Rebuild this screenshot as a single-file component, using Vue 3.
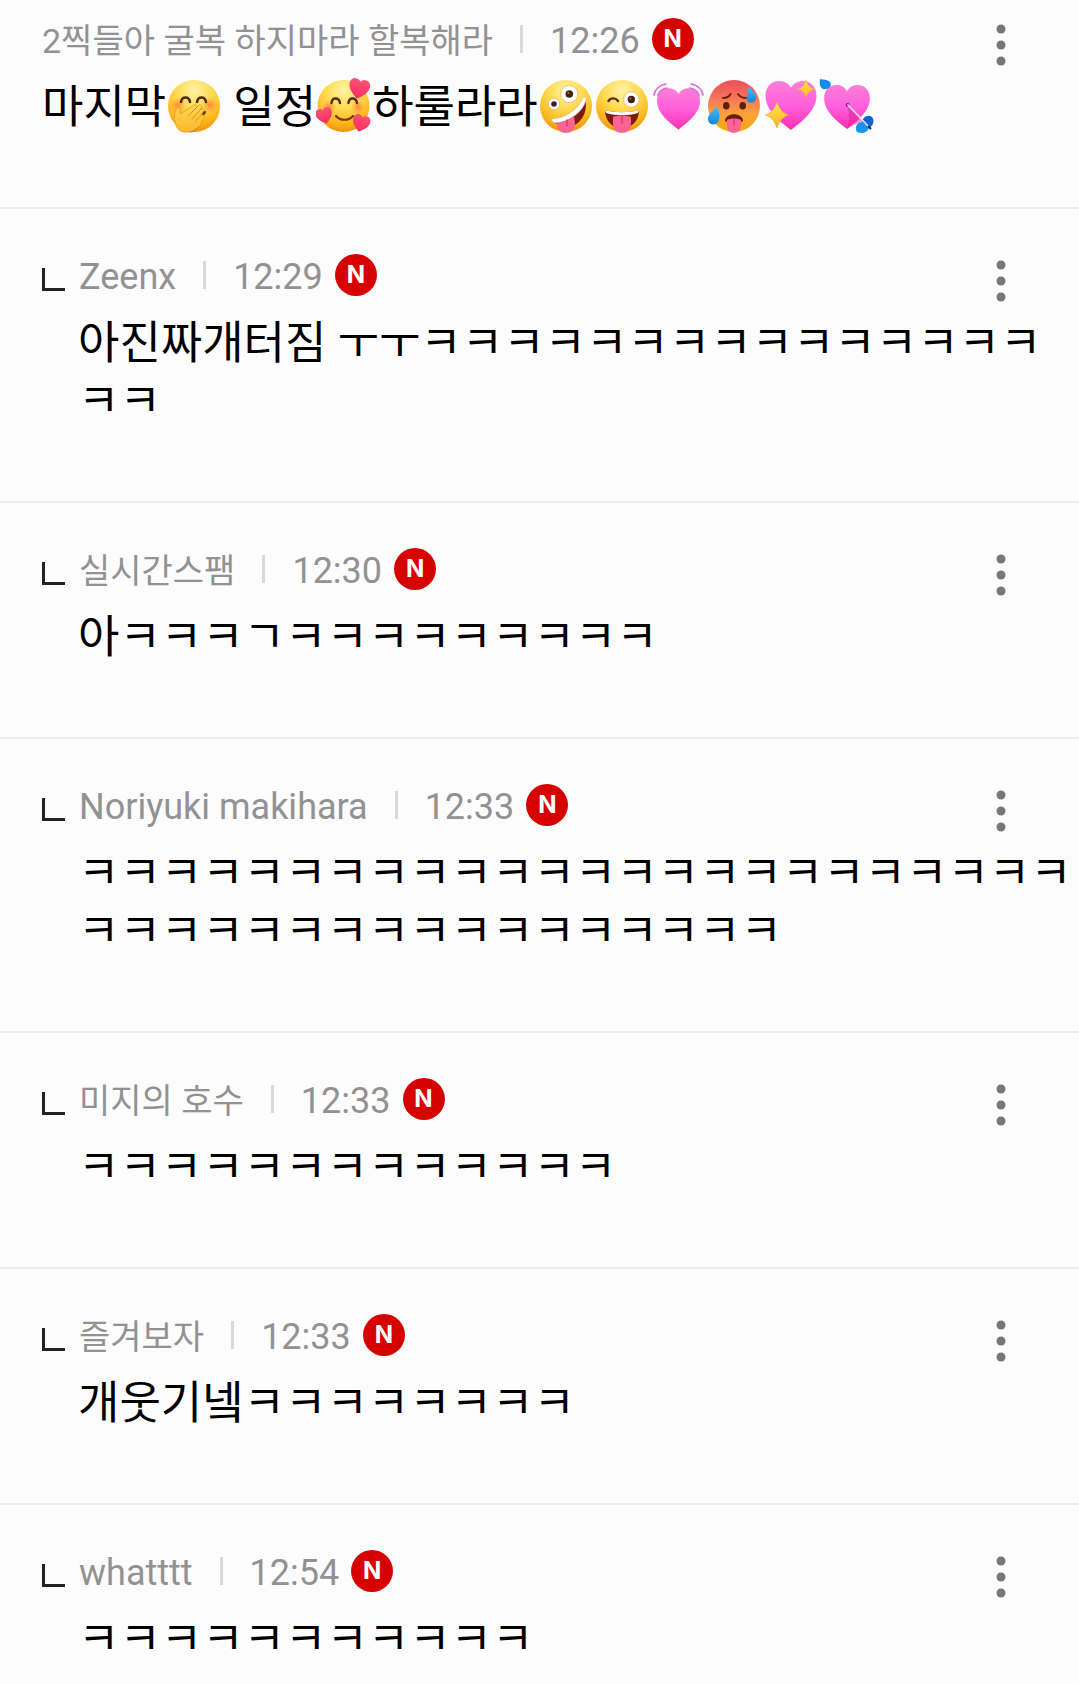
<script setup>
/**
 * Comment thread. A message is a list of parts: plain strings, or { emoji, label }
 * pointing at a symbol of the sprite at the top of the template.
 */
const comments = [
    {
        id: 1,
        author: '2찍들아 굴복 하지마라 할복해라',
        time: '12:26',
        reply: false,
        parts: [
            '마지막',
            { emoji: 'giggle', label: '🤭' },
            ' 일정',
            { emoji: 'adore', label: '🥰' },
            '하룰라라',
            { emoji: 'zany', label: '🤪' },
            { emoji: 'wink', label: '😜' },
            { emoji: 'beat', label: '💓' },
            { emoji: 'hot', label: '🥵' },
            { emoji: 'sparkle', label: '💖' },
            { emoji: 'arrow', label: '💘' },
        ],
    },
    { id: 2, author: 'Zeenx', time: '12:29', reply: true, parts: ['아진짜개터짐 ㅜㅜ' + 'ㅋ'.repeat(17)] },
    { id: 3, author: '실시간스팸', time: '12:30', reply: true, parts: ['아ㅋㅋㅋㄱ' + 'ㅋ'.repeat(9)] },
    { id: 4, author: 'Noriyuki makihara', time: '12:33', reply: true, parts: ['ㅋ'.repeat(41)] },
    { id: 5, author: '미지의 호수', time: '12:33', reply: true, parts: ['ㅋ'.repeat(13)] },
    { id: 6, author: '즐겨보자', time: '12:33', reply: true, parts: ['개웃기넼' + 'ㅋ'.repeat(8)] },
    { id: 7, author: 'whatttt', time: '12:54', reply: true, parts: ['ㅋ'.repeat(11)] },
];

const isHangul = (text) => /[가-힣]/.test(text);
</script>

<template>
    <svg class="sprite" aria-hidden="true">
        <defs>
            <radialGradient id="g-face" cx="0.5" cy="0.2" r="0.85">
                <stop offset="0" stop-color="#fff3a6" />
                <stop offset="0.4" stop-color="#fedb52" />
                <stop offset="0.75" stop-color="#fdb51c" />
                <stop offset="1" stop-color="#ee8708" />
            </radialGradient>
            <radialGradient id="g-blush">
                <stop offset="0" stop-color="#ff6d3a" stop-opacity="0.75" />
                <stop offset="1" stop-color="#ff8a3a" stop-opacity="0" />
            </radialGradient>
            <linearGradient id="g-hot" x1="0" y1="0" x2="0" y2="1">
                <stop offset="0" stop-color="#ec4d5c" />
                <stop offset="0.35" stop-color="#f6765a" />
                <stop offset="0.65" stop-color="#fba23a" />
                <stop offset="1" stop-color="#f5a80c" />
            </linearGradient>
            <linearGradient id="g-heart" x1="0" y1="0" x2="0" y2="1">
                <stop offset="0" stop-color="#fb7fd8" />
                <stop offset="0.5" stop-color="#ff5fdd" />
                <stop offset="1" stop-color="#fb2fae" />
            </linearGradient>
            <linearGradient id="g-red" x1="0" y1="0" x2="0" y2="1">
                <stop offset="0" stop-color="#fb5277" />
                <stop offset="1" stop-color="#f82b62" />
            </linearGradient>
            <linearGradient id="g-hand" x1="0" y1="0" x2="0" y2="1">
                <stop offset="0" stop-color="#ffd557" />
                <stop offset="1" stop-color="#fbb829" />
            </linearGradient>
            <linearGradient id="g-drop" x1="0" y1="0" x2="0" y2="1">
                <stop offset="0" stop-color="#4dbdf5" />
                <stop offset="1" stop-color="#0a86dc" />
            </linearGradient>
            <linearGradient id="g-star" x1="0" y1="0" x2="0" y2="1">
                <stop offset="0" stop-color="#ffe657" />
                <stop offset="1" stop-color="#fdb41c" />
            </linearGradient>
        </defs>

        <symbol id="heart" viewBox="0 0 52 50">
            <path d="M26 50C22 46 0 33 0 15C0 6 6 0 14 0C20 0 24 3 26 7C28 3 32 0 38 0C46 0 52 6 52 15C52 33 30 46 26 50Z" />
        </symbol>

        <symbol id="giggle" viewBox="0 0 56 58">
            <circle cx="28" cy="30" r="26" fill="url(#g-face)" />
            <circle cx="12" cy="29" r="8" fill="url(#g-blush)" />
            <circle cx="44" cy="29" r="8" fill="url(#g-blush)" />
            <path d="M15 26C16 20 23 20 24 26M31 26C32 20 39 20 40 26" fill="none" stroke="#56290f" stroke-width="2.6" stroke-linecap="round" />
            <path d="M35 36L40 35C40 38 38 40 35 40Z" fill="#7a2d10" />
            <path d="M32 54C29 57 25 55 21 56C14 57 10 52 9 46C8 42 8 36 11 32C13 31 15 33 14 38L28 29C30 28 32 30 30 32L33 29C35 28 37 30 35 33C37 31 39 34 37 36L35 39C38 38 39 41 37 43C35 48 33 52 32 54Z" fill="url(#g-hand)" stroke="#e99a18" stroke-width="0.8" />
            <path d="M30 32L22 40M35 33L26 43M36 38L29 46" fill="none" stroke="#e2930f" stroke-width="1" stroke-linecap="round" />
            <path d="M22 56C26 56 28 53 34 50L31 54C28 56 25 57 22 56Z" fill="#c36a0a" opacity="0.6" />
        </symbol>

        <symbol id="adore" viewBox="0 0 56 58">
            <circle cx="27.5" cy="30" r="26" fill="url(#g-face)" />
            <circle cx="13" cy="31" r="7" fill="url(#g-blush)" />
            <circle cx="42" cy="31" r="7" fill="url(#g-blush)" />
            <path d="M15.5 27C16 21 23 21 24 27M32.5 27C33 21 40 21 41 27" fill="none" stroke="#56290f" stroke-width="2.4" stroke-linecap="round" />
            <path d="M20 40C24 45 33 45 37 40" fill="none" stroke="#7a3408" stroke-width="2.2" stroke-linecap="round" />
            <g fill="url(#g-red)">
                <use href="#heart" x="32" y="3" width="22" height="20" transform="rotate(12 43 13)" />
                <use href="#heart" x="0" y="32" width="17" height="16" transform="rotate(-16 8 40)" />
                <use href="#heart" x="36" y="39" width="18" height="17" transform="rotate(16 45 47)" />
            </g>
        </symbol>

        <symbol id="zany" viewBox="0 0 56 58">
            <circle cx="28" cy="30" r="26" fill="url(#g-face)" />
            <circle cx="31.3" cy="18" r="8.6" fill="#fff" stroke="#e3b45c" stroke-width="0.8" />
            <circle cx="31.3" cy="18" r="3.8" fill="#43200f" />
            <circle cx="30.3" cy="17" r="1" fill="#9b7460" />
            <circle cx="16" cy="28" r="5.8" fill="#fff" stroke="#e3b45c" stroke-width="0.8" />
            <circle cx="16" cy="28" r="2.8" fill="#43200f" />
            <path d="M15 45C29 44 41 37 47 23C50 32 46 44 37 49C29 53 20 51 15 45Z" fill="#7b1c0d" />
            <path d="M14 43C27 42 39 35 45 22C46 20 48 21 48 24C45 36 31 46 18 47C15 47 13 44 14 43Z" fill="#fff" stroke="#ccb9a0" stroke-width="0.7" />
            <path d="M19 47C25 46 31 44 36 40L37 48C37 54 33 57 28 57C23 57 19 54 19 47Z" fill="#fa6394" />
            <path d="M29 44V50" stroke="#d63e6e" stroke-width="1.5" stroke-linecap="round" />
        </symbol>

        <symbol id="wink" viewBox="0 0 56 58">
            <circle cx="28" cy="30" r="26" fill="url(#g-face)" />
            <path d="M14.5 25C17 21 22 22 24 25" fill="none" stroke="#5b2c0f" stroke-width="2.4" stroke-linecap="round" />
            <circle cx="37.3" cy="23.5" r="7.8" fill="#fff" stroke="#e3b45c" stroke-width="0.8" />
            <circle cx="37.3" cy="23.5" r="3.7" fill="#43200f" />
            <circle cx="36.3" cy="22.5" r="1" fill="#9b7460" />
            <path d="M11 34C20 37 36 37 45 34C45 46 37 52 28 52C19 52 11 46 11 34Z" fill="#7b1c0d" />
            <path d="M11 34C20 37 36 37 45 34L44 37C34 40 22 40 12 37Z" fill="#fff" />
            <path d="M19 41C24 39 32 39 37 41V47C37 54 33 57 28 57C23 57 19 54 19 47Z" fill="#fa6394" />
            <path d="M28 40V47" stroke="#d63e6e" stroke-width="1.5" stroke-linecap="round" />
        </symbol>

        <symbol id="beat" viewBox="0 0 56 58">
            <use href="#heart" x="7" y="12" width="43" height="42" fill="url(#g-heart)" />
            <path d="M4 19C5 13 10 9 16 8M8 19C9 16 12 13 17 12M53 19C52 13 47 9 41 8M49 19C48 16 45 13 40 12" fill="none" stroke="#df6bd1" stroke-width="1.7" stroke-linecap="round" />
        </symbol>

        <symbol id="hot" viewBox="0 0 56 58">
            <circle cx="28" cy="30" r="26" fill="url(#g-hot)" />
            <path d="M17 22C20 22 23 21 24.5 18M32 18C34 21 37 22 40 22" fill="none" stroke="#74220f" stroke-width="2" stroke-linecap="round" />
            <ellipse cx="20.3" cy="29.7" rx="3.3" ry="3.8" fill="#5a210e" />
            <ellipse cx="36.7" cy="29.7" rx="3.3" ry="3.8" fill="#5a210e" />
            <path d="M19 45C19 36 37 36 37 45C35 47 21 47 19 45Z" fill="#6d1d0c" />
            <path d="M21 44C25 42 31 42 35 44V49C35 54 32 57 28 57C24 57 21 54 21 49Z" fill="#fa6394" />
            <path d="M28 43V49" stroke="#d63e6e" stroke-width="1.4" stroke-linecap="round" />
            <path d="M43 11C47 15 51 19 50 23C49 27 43 28 41 24C40 20 42 15 43 11Z" fill="url(#g-drop)" />
            <path d="M11 30C13 36 15 41 12 46C9 50 3 49 2 44C1 38 7 36 11 30Z" fill="url(#g-drop)" />
        </symbol>

        <symbol id="sparkle" viewBox="0 0 56 58">
            <use href="#heart" x="3" y="5" width="52" height="49" fill="url(#g-heart)" />
            <g fill="url(#g-star)" stroke="#e9a14a" stroke-width="0.5">
                <path d="M44 4C46 10 48 12 53 13C48 14 46 16 44 22C42 16 40 14 35 13C40 12 42 10 44 4Z" />
                <path d="M15 26C18 34 21 37 27 39C21 41 18 44 15 52C12 44 9 41 3 39C9 37 12 34 15 26Z" />
            </g>
        </symbol>

        <symbol id="arrow" viewBox="0 0 56 58">
            <use href="#heart" x="6" y="9" width="46" height="44" fill="url(#g-heart)" />
            <path d="M2 3C5 4 9 3 12 6C14 9 12 13 8 13C3 14 1 10 2 3Z" fill="#1489e8" />
            <path d="M30 31L45 45L34 50L29 53C32 46 31 38 30 31Z" fill="#e01d92" opacity="0.5" />
            <path d="M44 47C44 41 50 38 54 41C57 45 55 50 51 52Z" fill="#0b63d6" />
            <path d="M45 46C39 46 36 51 39 56C44 58 49 57 51 52Z" fill="#1795ee" />
            <circle cx="29.7" cy="29" r="2" fill="#8e1769" />
            <path d="M30 29L51 51" stroke="#e6dcf5" stroke-width="1.8" stroke-linecap="round" />
            <path d="M50 50L53 53" stroke="#0a2368" stroke-width="2" />
        </symbol>
    </svg>

    <ul class="thread">
        <li v-for="comment in comments" :key="comment.id" class="comment" :class="{ 'comment--reply': comment.reply }">
            <div class="meta">
                <span v-if="comment.reply" class="hook" aria-hidden="true"></span>
                <span class="author" :class="{ 'author--hangul': isHangul(comment.author) }">{{ comment.author }}</span>
                <span class="bar" aria-hidden="true"></span>
                <time class="time">{{ comment.time }}</time>
                <span class="new">N</span>
                <button type="button" class="more" aria-label="더보기">
                    <svg width="10" height="42" viewBox="0 0 10 42" fill="#777">
                        <circle cx="5" cy="5" r="4.5" />
                        <circle cx="5" cy="21" r="4.5" />
                        <circle cx="5" cy="37" r="4.5" />
                    </svg>
                </button>
            </div>
            <p class="message"><template v-for="(part, i) in comment.parts" :key="i"><svg v-if="part.emoji" class="emoji" role="img" :aria-label="part.label"><use :href="`#${part.emoji}`" /></svg><template v-else>{{ part }}</template></template></p>
        </li>
    </ul>
</template>

<style>
body {
    background: #fcfcfc;
}
</style>

<style scoped>
.sprite {
    position: absolute;
    width: 0;
    height: 0;
}
.thread {
    margin: 0;
    padding: 0;
    list-style: none;
    font-family: Roboto, 'Noto Sans CJK KR', sans-serif;
}
.comment {
    padding: 45px 0 70px 42px;
    border-bottom: 2px solid #ececec;
}
.comment:first-child {
    padding-top: 18px;
}
.comment:last-child {
    padding-bottom: 0;
    border-bottom: 0;
}
.meta {
    display: flex;
    align-items: center;
    height: 42px;
    padding-right: 58px;
    color: #929292;
    font-size: 36px;
    line-height: 42px;
    white-space: nowrap;
}
.hook {
    box-sizing: border-box;
    width: 23px;
    height: 23px;
    margin: 8px 14px 0 0;
    border-left: 3px solid #222;
    border-bottom: 3px solid #222;
}
.author,
.time {
    padding-top: 3px;
}
.author--hangul {
    font-size: 34px;
}
.bar {
    width: 3px;
    height: 28px;
    margin: 0 27px;
    background: #d9d9d9;
}
.new {
    width: 42px;
    height: 42px;
    margin-left: 12px;
    border-radius: 50%;
    background: #d60202;
    color: #fff;
    font-family: Inter, sans-serif;
    font-size: 24px;
    font-weight: 700;
    text-align: center;
}
.more {
    width: 40px;
    height: 42px;
    margin: 12px 0 0 auto;
    padding: 0;
    border: 0;
    background: none;
    cursor: pointer;
}
.more svg {
    display: block;
    margin: 0 auto;
}
.message {
    margin: 19px 0 0;
    color: #000;
    font-size: 45px;
    line-height: 58px;
    word-break: break-all;
}
.comment--reply .message {
    padding-left: 36px;
}
.emoji {
    width: 56px;
    height: 58px;
    margin-top: -3px;
    vertical-align: top;
}
</style>
